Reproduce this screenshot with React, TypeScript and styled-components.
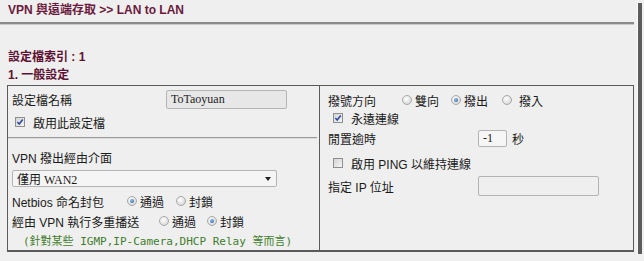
import React from "react";
import styled, { createGlobalStyle, css } from "styled-components";

const Global = createGlobalStyle`
  html, body { margin: 0; padding: 0; background: #f0f0f0; }
  body { font-family: "Liberation Sans", "Noto Sans CJK TC", sans-serif; color: #1a1a1a; }
`;

const Frame = styled.div`
  position: relative;
  width: 638px;
  height: 254px;
  background: #efefef;
  border-right: 1px solid #fbfbfb;
  box-shadow: 4px 3px 0 #5c5c5c;
  box-sizing: border-box;
`;

const Title = styled.div`
  height: 20px;
  padding: 3px 0 0 8px;
  box-sizing: border-box;
  font-size: 12px;
  font-weight: bold;
  color: #6a1a3c;
  line-height: 14px;
`;

const Rule = styled.div`
  margin: 2px 0 0 0;
  width: 634px;
  height: 2px;
  background: #8a8a8a;
  border-bottom: 1px solid #c9c9c9;
`;

const Heading = styled.div<{ $mt: number }>`
  margin-top: ${(p) => p.$mt}px;
  padding-left: 8px;
  font-size: 12px;
  font-weight: bold;
  color: #5e1233;
  line-height: 16px;
  height: 16px;
`;

const Box = styled.div`
  margin: 2px 0 0 7px;
  width: 627px;
  height: 167px;
  border: 1px solid #5a5a5a;
  border-bottom-width: 2px;
  box-sizing: border-box;
  display: grid;
  grid-template-columns: 312px 1fr;
`;

const LeftCol = styled.div`
  border-right: 1px solid #5a5a5a;
  display: flex;
  flex-direction: column;
  padding-top: 2px;
`;

const RightCol = styled.div`
  display: flex;
  flex-direction: column;
  padding: 3px 0 0 4px;
`;

const Row = styled.div<{ $h: number; $pl?: number }>`
  height: ${(p) => p.$h}px;
  display: flex;
  align-items: center;
  padding-left: ${(p) => p.$pl ?? 4}px;
  font-size: 12px;
  white-space: nowrap;
`;

const Label = styled.span<{ $w?: number }>`
  display: inline-block;
  width: ${(p) => (p.$w ? `${p.$w}px` : "auto")};
  font-size: 12px;
`;

const Divider = styled.div`
  margin: 3px 2px 0 0;
  height: 1px;
  background: #9a9a9a;
  border-bottom: 1px solid #dcdcdc;
`;

const TextInput = styled.div<{ $w: number; $h: number; $bg: string }>`
  width: ${(p) => p.$w}px;
  height: ${(p) => p.$h}px;
  box-sizing: border-box;
  border: 1px solid #b4b4b4;
  border-radius: 2px;
  background: ${(p) => p.$bg};
  font-family: "Liberation Serif", "Noto Sans CJK TC", serif;
  font-size: 12px;
  line-height: ${(p) => p.$h - 2}px;
  padding-left: 4px;
  color: #222;
`;

const Select = styled.div`
  margin: 4px 0 0 4px;
  width: 265px;
  height: 17px;
  box-sizing: border-box;
  border: 1px solid #b4b4b4;
  border-radius: 2px;
  background: #f5f5f5;
  display: flex;
  align-items: center;
  justify-content: space-between;
  padding: 0 5px 0 4px;
  font-family: "Liberation Serif", "Noto Sans CJK TC", serif;
  font-size: 12px;
`;

const Caret = styled.span`
  width: 0;
  height: 0;
  border-left: 3px solid transparent;
  border-right: 3px solid transparent;
  border-top: 4px solid #222;
`;

const Check = styled.span`
  display: inline-flex;
  align-items: center;
  justify-content: center;
  width: 10px;
  height: 10px;
  box-sizing: border-box;
  border: 1px solid #8e8f8f;
  background: linear-gradient(135deg, #d4d4d4, #f4f4f4);
  margin-right: 8px;
`;

const Radio = styled.span<{ $on?: boolean }>`
  position: relative;
  display: inline-block;
  width: 10px;
  height: 10px;
  box-sizing: border-box;
  border-radius: 50%;
  border: 1px solid #a8a8a8;
  background: radial-gradient(circle at 40% 35%, #ffffff, #cdcdcd);
  margin-right: 3px;
  ${(p) =>
    p.$on &&
    css`
      &::after {
        content: "";
        position: absolute;
        left: 2px;
        top: 2px;
        width: 4px;
        height: 4px;
        border-radius: 50%;
        background: radial-gradient(circle at 40% 35%, #8fc4f2, #1d4f96);
      }
    `}
`;

const Opt = styled.span<{ $gap: number }>`
  display: inline-flex;
  align-items: center;
  margin-right: ${(p) => p.$gap}px;
`;

const Note = styled.div`
  height: 18px;
  display: flex;
  align-items: center;
  padding-left: 15px;
  color: #3f7d2c;
  font-family: "DejaVu Sans Mono", "Noto Sans CJK TC", monospace;
  font-size: 11px;
  white-space: nowrap;
`;

const CheckMark = () => (
  <svg width="8" height="8" viewBox="0 0 9 9">
    <path d="M1.5 4.6 L3.6 6.8 L7.6 1.6" fill="none" stroke="#2b4aa0" strokeWidth="1.7" />
  </svg>
);

export default function App() {
  return (
    <>
      <Global />
      <Frame>
        <Title>VPN 與遠端存取 &gt;&gt; LAN to LAN</Title>
        <Rule />
        <Heading $mt={24}>設定檔索引 : 1</Heading>
        <Heading $mt={2}>1. 一般設定</Heading>
        <Box>
          <LeftCol>
            <Row $h={22}>
              <Label $w={154}>設定檔名稱</Label>
              <TextInput $w={121} $h={19} $bg="#e7e7e7">ToTaoyuan</TextInput>
            </Row>
            <Row $h={24} $pl={7}>
              <Check>
                <CheckMark />
              </Check>
              啟用此設定檔
            </Row>
            <Divider />
            <Row $h={18} style={{ marginTop: 9 }}>
              VPN 撥出經由介面
            </Row>
            <Select>
              <span>僅用 WAN2</span>
              <Caret />
            </Select>
            <Row $h={20} style={{ marginTop: 4 }}>
              <Label $w={115}>Netbios 命名封包</Label>
              <Opt $gap={12}>
                <Radio $on />
                通過
              </Opt>
              <Opt $gap={0}>
                <Radio />
                封鎖
              </Opt>
            </Row>
            <Row $h={20}>
              <Label $w={147}>經由 VPN 執行多重播送</Label>
              <Opt $gap={11}>
                <Radio />
                通過
              </Opt>
              <Opt $gap={0}>
                <Radio $on />
                封鎖
              </Opt>
            </Row>
            <Note>(針對某些 IGMP,IP-Camera,DHCP Relay 等而言)</Note>
          </LeftCol>
          <RightCol>
            <Row $h={22}>
              <Label $w={74}>撥號方向</Label>
              <Opt $gap={12}>
                <Radio />
                雙向
              </Opt>
              <Opt $gap={14}>
                <Radio $on />
                撥出
              </Opt>
              <Opt $gap={0}>
                <Radio style={{ marginRight: 7 }} />
                撥入
              </Opt>
            </Row>
            <Row $h={14} $pl={9}>
              <Check>
                <CheckMark />
              </Check>
              永遠連線
            </Row>
            <Row $h={27}>
              <Label $w={150}>閒置逾時</Label>
              <TextInput $w={29} $h={17} $bg="#f6f6f6">-1</TextInput>
              <Label style={{ marginLeft: 5 }}>秒</Label>
            </Row>
            <Row $h={22} $pl={9}>
              <Check />
              啟用 PING 以維持連線
            </Row>
            <Row $h={24}>
              <Label $w={150}>指定 IP 位址</Label>
              <TextInput $w={121} $h={20} $bg="#efefef" />
            </Row>
          </RightCol>
        </Box>
      </Frame>
    </>
  );
}
